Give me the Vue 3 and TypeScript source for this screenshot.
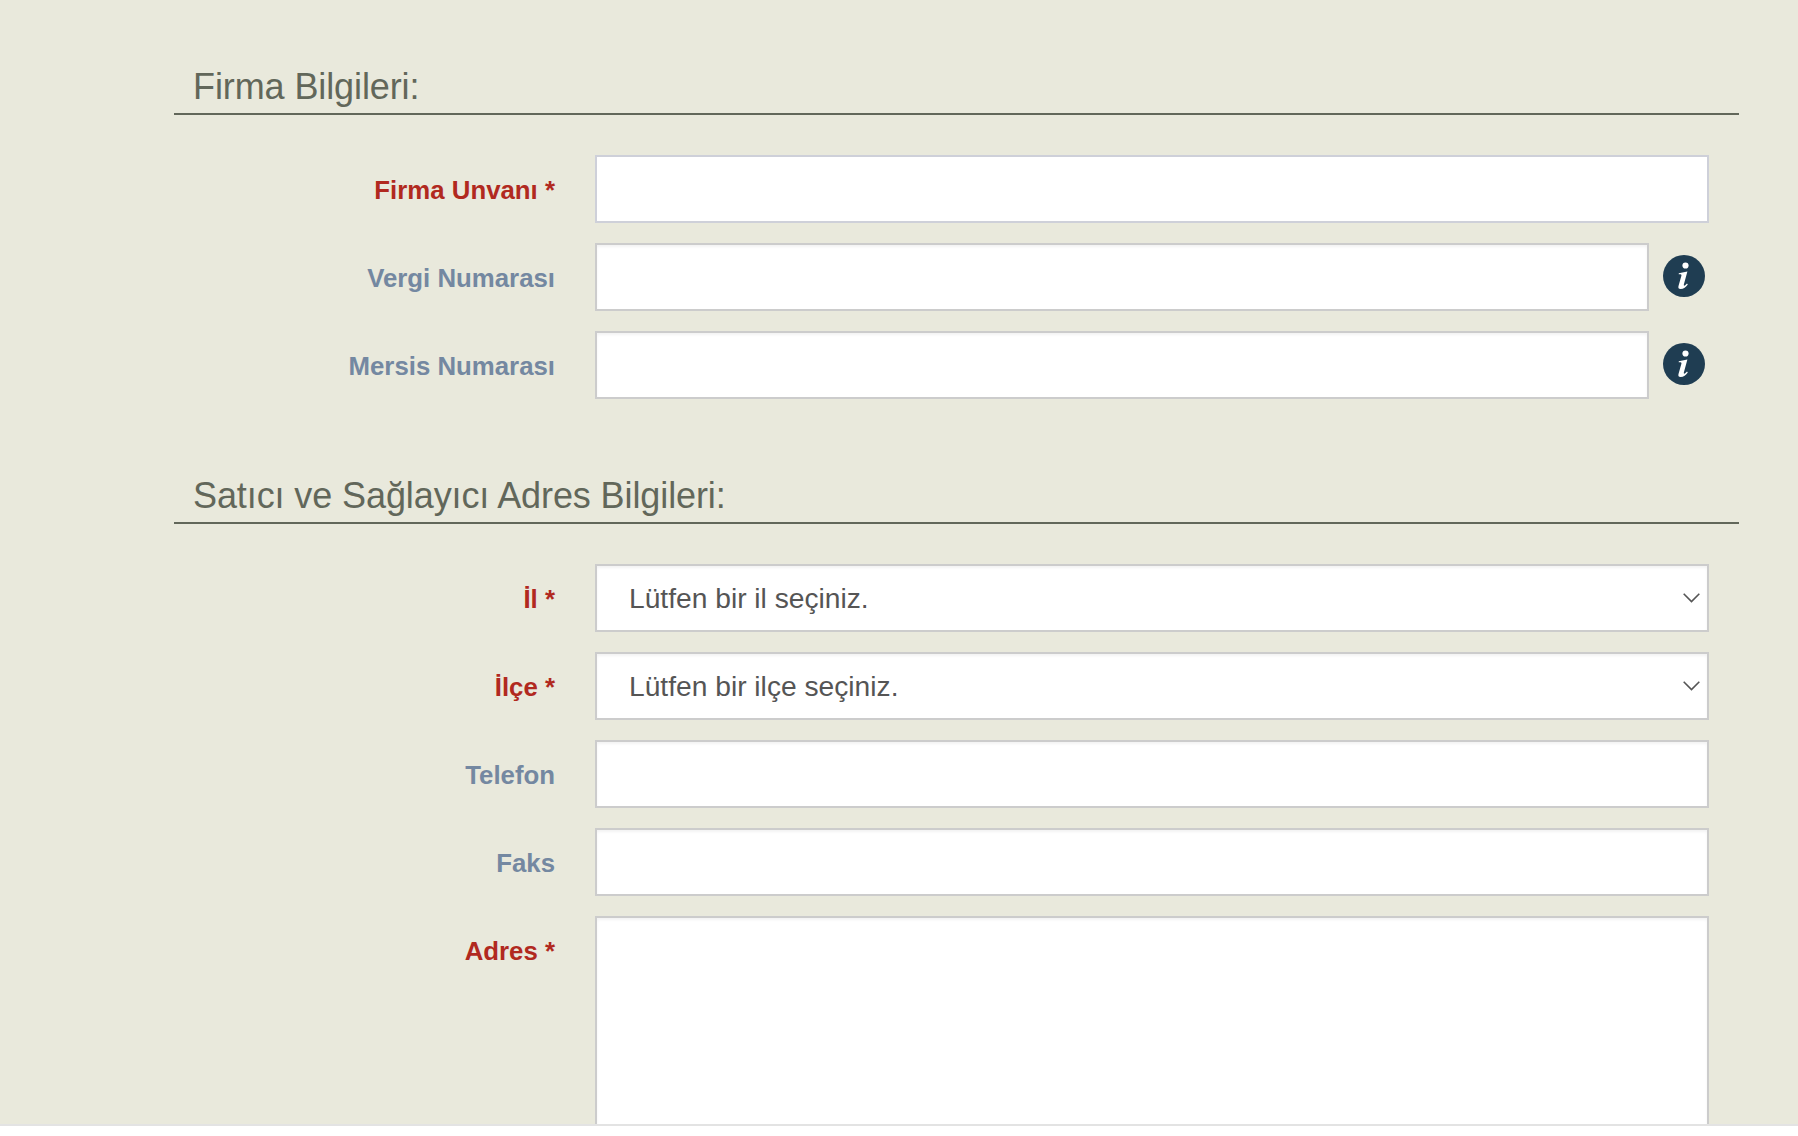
<script setup lang="ts">
interface Field {
  label: string
  required?: boolean
  kind: 'input' | 'select' | 'textarea'
  placeholder?: string
  info?: boolean
  flat?: boolean
}

const firm: Field[] = [
  { label: 'Firma Unvanı', required: true, kind: 'input', flat: true },
  { label: 'Vergi Numarası', kind: 'input', info: true },
  { label: 'Mersis Numarası', kind: 'input', info: true },
]

const address: Field[] = [
  { label: 'İl', required: true, kind: 'select', placeholder: 'Lütfen bir il seçiniz.' },
  { label: 'İlçe', required: true, kind: 'select', placeholder: 'Lütfen bir ilçe seçiniz.' },
  { label: 'Telefon', kind: 'input' },
  { label: 'Faks', kind: 'input' },
  { label: 'Adres', required: true, kind: 'textarea' },
]

const sections = [
  { title: 'Firma Bilgileri:', fields: firm },
  { title: 'Satıcı ve Sağlayıcı Adres Bilgileri:', fields: address },
]
</script>

<template>
  <main class="page">
    <section v-for="s in sections" :key="s.title" class="section">
      <h2 class="title">{{ s.title }}</h2>
      <div class="rows">
        <div v-for="f in s.fields" :key="f.label" class="row">
          <label class="label" :class="{ req: f.required }">{{ f.label }}{{ f.required ? ' *' : '' }}</label>
          <div class="control">
            <input v-if="f.kind === 'input'" class="box" :class="{ flat: f.flat }" type="text" />
            <textarea v-else-if="f.kind === 'textarea'" class="box area"></textarea>
            <div v-else class="select-wrap">
              <select class="box select">
                <option>{{ f.placeholder }}</option>
              </select>
              <svg class="chev" viewBox="0 0 17 10" width="17" height="10" aria-hidden="true">
                <path d="M0.7 0.7 L8.5 8.6 L16.3 0.7" fill="none" stroke="#555" stroke-width="1.6" />
              </svg>
            </div>
            <svg v-if="f.info" class="info" viewBox="0 0 42 42" width="42" height="42" aria-hidden="true">
              <circle cx="21" cy="21" r="21" fill="#1f3d52" />
              <circle cx="22.5" cy="10.5" r="3.1" fill="#fff" />
              <path
                d="M15.8 18.2 L24.4 16.4 L20.9 29.2 C20.5 30.7 21.3 31 22.2 30.2 L24 28.6 L24.8 29.4 C23 32 20.6 34 17.6 34 C15.6 34 15 32.8 15.5 31 L18.4 20.8 C18.7 19.6 18 19.2 15.7 19.3 Z"
                fill="#fff"
              />
            </svg>
          </div>
        </div>
      </div>
    </section>
  </main>
</template>

<style>
html, body { margin: 0; background: #fff; }
</style>

<style scoped>
.page {
  height: 1124px;
  overflow: hidden;
  background: #e9e9dc;
  border-bottom: 2px solid #e3e3e3;
  padding-left: 174px;
  padding-right: 59px;
  font-family: "Liberation Sans", Arial, sans-serif;
}
.section { padding-top: 63px; }
.section + .section { padding-top: 73px; }
.title {
  margin: 0;
  padding-left: 19px;
  height: 50px;
  line-height: 48px;
  font-size: 36px;
  font-weight: 400;
  letter-spacing: -0.1px;
  color: #62675a;
  border-bottom: 2px solid #62675a;
}
.rows {
  display: flex;
  flex-direction: column;
  gap: 20px;
  padding-top: 40px;
}
.row {
  display: grid;
  grid-template-columns: 381px 1114px;
  column-gap: 40px;
}
.label {
  height: 68px;
  font-size: 25.8px;
  font-weight: 700;
  line-height: 70px;
  text-align: right;
  color: #7488a1;
}
.label.req { color: #b1291f; }
.control {
  display: flex;
  align-items: flex-start;
  gap: 14px;
  min-width: 0;
}
.box {
  display: block;
  flex: 1;
  min-width: 0;
  width: 100%;
  height: 68px;
  box-sizing: border-box;
  margin: 0;
  padding: 0 32px;
  border: 2px solid #cccccc;
  border-radius: 0;
  background: #fff;
  box-shadow: inset 0 2px 3px rgba(0, 0, 0, 0.05);
  font-family: inherit;
  font-size: 28.2px;
  color: #555;
  outline: none;
}
.box.flat {
  border-color: #ced0d9;
  box-shadow: none;
}
.select { appearance: none; -webkit-appearance: none; }
.select-wrap { position: relative; flex: 1; }
.chev { position: absolute; right: 9px; top: 29px; }
.area { height: 300px; resize: none; }
.info {
  flex: none;
  margin-top: 12px;
  margin-right: 4px;
}
</style>
